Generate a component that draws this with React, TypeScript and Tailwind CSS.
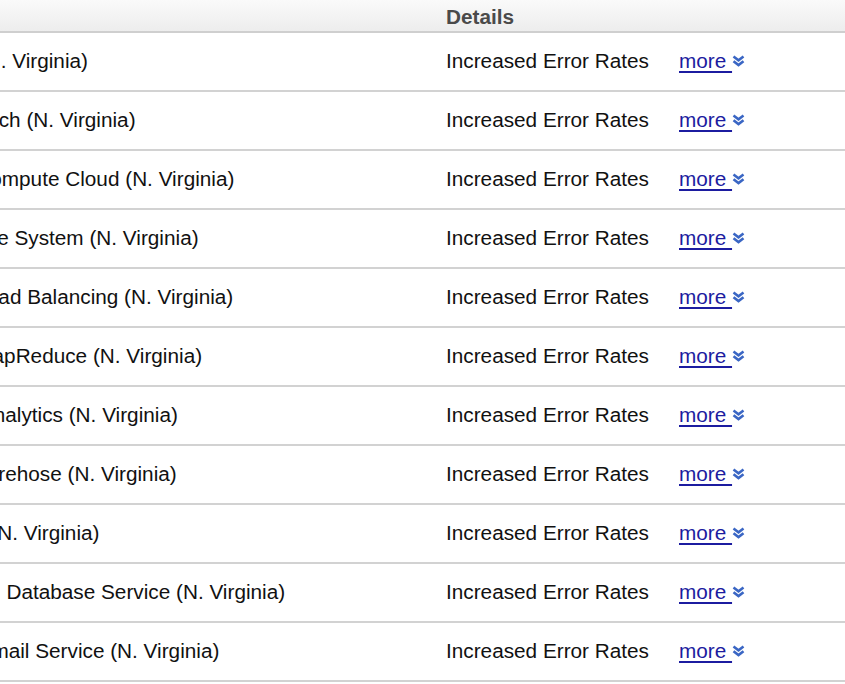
import React from 'react';

const services = [
    "Amazon Athena",
    "Amazon CloudWatch",
    "Amazon Elastic Compute Cloud",
    "Amazon Elastic File System",
    "Amazon Elastic Load Balancing",
    "Amazon Elastic MapReduce",
    "Amazon Kinesis Analytics",
    "Amazon Kinesis Firehose",
    "Amazon Lightsail",
    "Amazon Relational Database Service",
    "Amazon Simple Email Service",
];

const DoubleChevron: React.FC = () => (
    <svg width="13" height="12" viewBox="0 0 13 12" className="mt-[1px]" aria-hidden="true">
        <polyline points="1.5,1.5 6.5,5.3 11.5,1.5" fill="none" stroke="#3a66c4" strokeWidth="2.6" />
        <polyline points="1.5,6.3 6.5,10.1 11.5,6.3" fill="none" stroke="#3a66c4" strokeWidth="2.6" />
    </svg>
);

const App: React.FC = () => {
    return (
        <div className="w-[845px] h-[684px] overflow-hidden bg-white font-['Liberation_Sans',Arial,sans-serif] text-[20.75px] text-[#111]">
            {/* Header */}
            <div className="h-[33px] grid grid-cols-[446px_1fr] items-center bg-gradient-to-b from-[#fafafa] to-[#ededed] border-b-2 border-[#cfcfcf]">
                <div />
                <div className="font-bold text-[#4a4a4a] pt-[1px]">Details</div>
            </div>

            {services.map((name) => (
                <div
                    key={name}
                    className="h-[59px] grid grid-cols-[446px_233px_1fr] items-center pb-[2px] border-b-2 border-[#d2d2d2]"
                >
                    <div className="overflow-hidden whitespace-nowrap">
                        <span className="block -ml-[173.5px]">{name} (N. Virginia)</span>
                    </div>
                    <div className="whitespace-nowrap">Increased Error Rates</div>
                    <div className="flex items-center whitespace-nowrap">
                        <a href="#" className="text-[#1c1ca0] underline decoration-2 underline-offset-[3px]">more&nbsp;</a>
                        <DoubleChevron />
                    </div>
                </div>
            ))}
        </div>
    );
};

export default App;
